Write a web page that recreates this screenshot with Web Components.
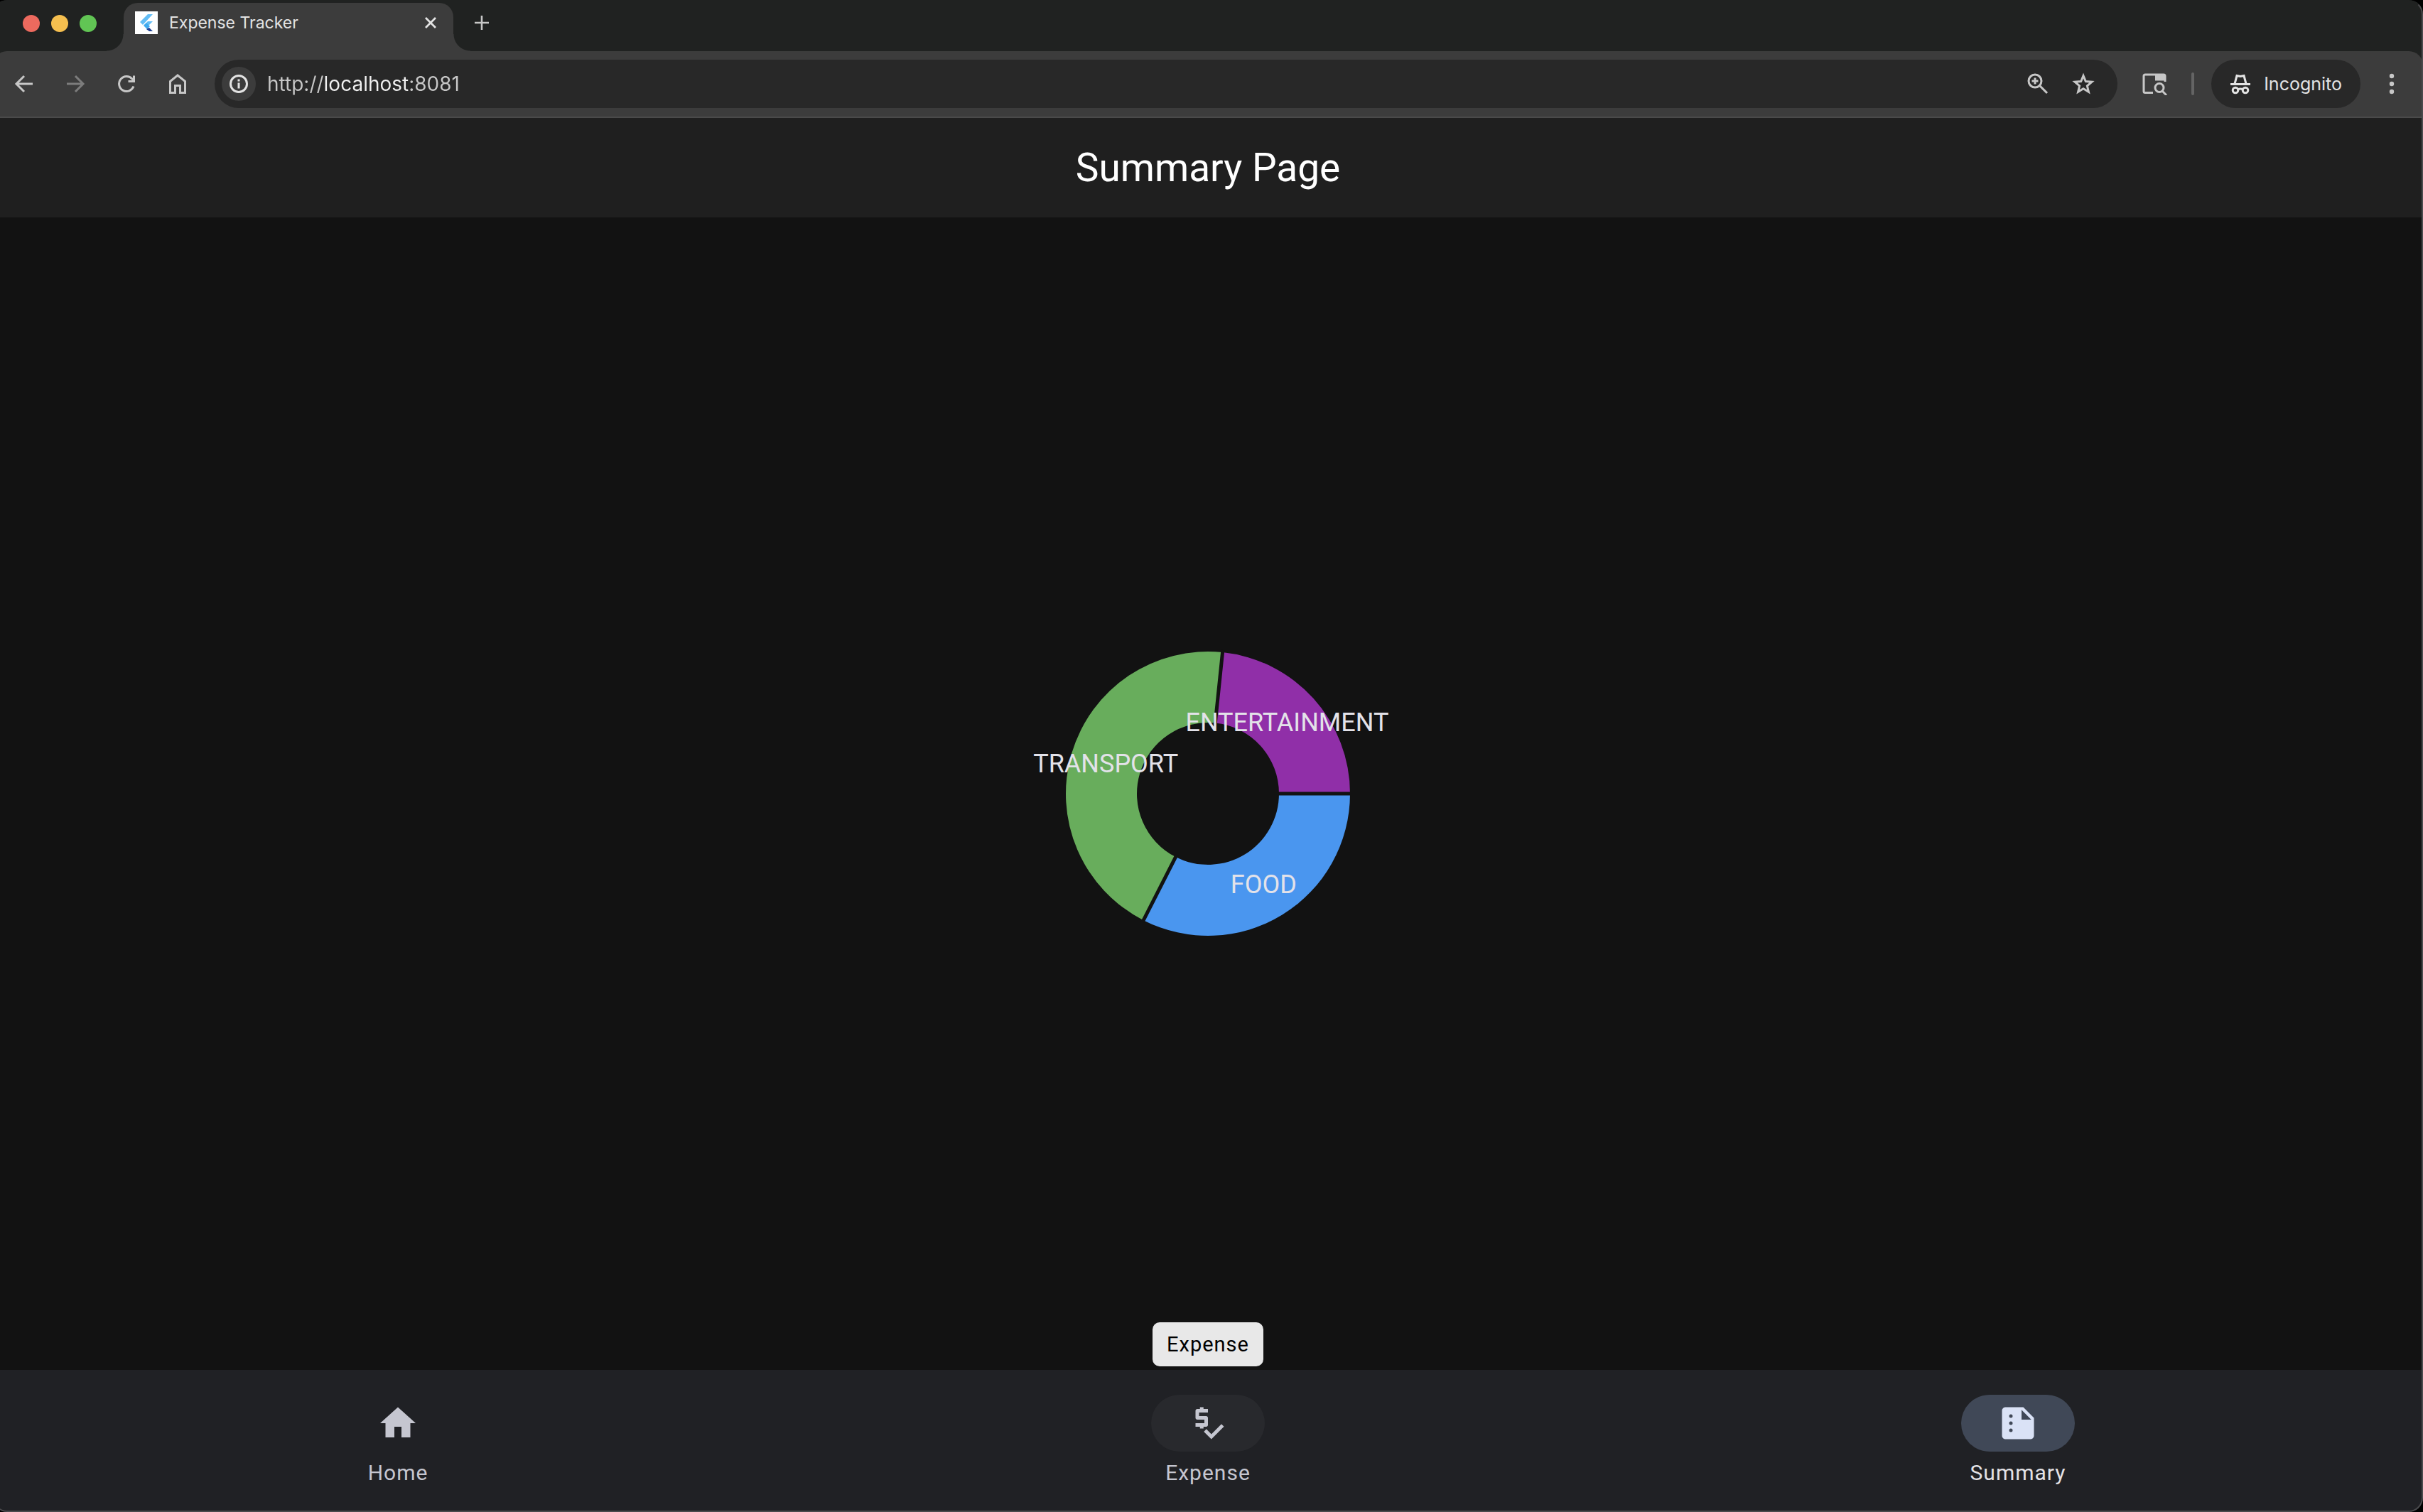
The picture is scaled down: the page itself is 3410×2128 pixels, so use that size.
<!DOCTYPE html>
<html lang="en">
<head>
<meta charset="utf-8">
<title>Expense Tracker</title>
<style>
  html, body { margin: 0; height: 100%; background: #000; overflow: hidden; }
  body { font-family: Inter, "Liberation Sans", sans-serif; }
</style>
</head>
<body>
<browser-window>
  <tab-strip slot="tabs"><browser-tab>Expense Tracker</browser-tab></tab-strip>
  <browser-toolbar slot="toolbar"></browser-toolbar>
  <app-bar>Summary Page</app-bar>
  <app-body><expense-chart></expense-chart></app-body>
  <nav-bar>
    <nav-item icon="home">Home</nav-item>
    <nav-item icon="expense" hovered tip="Expense">Expense</nav-item>
    <nav-item icon="summary" selected>Summary</nav-item>
  </nav-bar>
</browser-window>
<script>
function define(name, markup, setup) {
  customElements.define(name, class extends HTMLElement {
    connectedCallback() {
      if (this.shadowRoot) return;
      const root = this.attachShadow({ mode: 'open' });
      root.innerHTML = '<style>:host,*{box-sizing:border-box}button{border:0;padding:0;margin:0;background:none;color:inherit;font:inherit;cursor:pointer}svg{display:block}</style>' + markup;
      if (setup) setup.call(this, root);
    }
  });
}

define('browser-window', `
<style>
  /* The window starts 10px beyond the left edge of the screen. */
  :host { display: flex; flex-direction: column; position: relative;
    height: 100vh; margin-left: -10px; border-radius: 20px; overflow: hidden; background: #202221; }
  :host::after { content: ""; position: absolute; inset: 0; border-radius: 20px; pointer-events: none;
    border: 2px solid #4b4b4e; border-top-color: transparent; }
</style>
<slot name="tabs"></slot><slot name="toolbar"></slot><slot></slot>`);

define('tab-strip', `
<style>
  :host { display: flex; align-items: flex-start; height: 72px; padding: 4px 0 0 42px; background: #202221; }
  .lights { display: flex; gap: 16px; padding-top: 17px; margin-right: 38px; }
  .lights button { width: 24px; height: 24px; border-radius: 50%; }
  .close { background: #ed6a5e; } .min { background: #f5bf4f; } .max { background: #61c554; }
  .new { width: 56px; height: 56px; display: grid; place-items: center; margin-left: 12px; }
</style>
<div class="lights">
  <button class="close" aria-label="Close window"></button>
  <button class="min" aria-label="Minimise window"></button>
  <button class="max" aria-label="Zoom window"></button>
</div>
<slot></slot>
<button class="new" aria-label="New tab"><svg width="22" height="22" viewBox="0 0 22 22" stroke="#c7c7c7" stroke-width="2.6"><path d="M11 1v20M1 11h20"/></svg></button>`);

define('browser-tab', `
<style>
  :host { display: flex; align-items: center; position: relative; width: 464px; height: 68px;
    padding: 0 16px 12px; gap: 16px; border-radius: 20px 20px 0 0; background: #3c3c3c; color: #e3e3e3;
    font-size: 23px; line-height: 32px; }
  :host::before, :host::after { content: ""; position: absolute; bottom: 0; width: 24px; height: 24px; }
  :host::before { right: 100%; background: radial-gradient(circle at 0 0, transparent 23px, #3c3c3c 24px); }
  :host::after { left: 100%; background: radial-gradient(circle at 100% 0, transparent 23px, #3c3c3c 24px); }
  .title { flex: 1; white-space: nowrap; }
  button { width: 32px; height: 32px; display: grid; place-items: center; }
</style>
<svg width="32" height="32" viewBox="0 0 32 32"><rect width="32" height="32" fill="#fff"/>
  <path d="M18 4h7L11 19l-4-4z" fill="#63bdf5"/><path d="M18 14h7l-6 6-6-1z" fill="#63bdf5"/>
  <path d="M12 20l4-4 5 5-4 4z" fill="#3fa9ee"/><path d="M16 25l4-2 5 5h-5z" fill="#1c3f94"/></svg>
<span class="title"><slot></slot></span>
<button aria-label="Close tab"><svg width="16" height="16" viewBox="0 0 16 16" stroke="#e3e3e3" stroke-width="2.8"><path d="M1 1l14 14M15 1L1 15"/></svg></button>`);

define('browser-toolbar', `
<style>
  :host { display: flex; align-items: center; justify-content: space-between; height: 94px;
    padding: 0 16px; border-bottom: 2px solid #4a4a4a; border-radius: 20px 20px 0 0; background: #3c3c3c; color: #c7c7c7; }
  .nav { display: flex; gap: 16px; }
  .icon { width: 56px; height: 56px; display: grid; place-items: center; flex: none; }
  .icon[disabled] { color: #7c7c7c; }
  svg { fill: none; stroke: currentColor; stroke-width: 3; }
  form { flex: 1; display: flex; align-items: center; height: 68px; margin: 0 24px; padding: 0 20px 0 10px; gap: 8px;
    border-radius: 34px; background: #282828; }
  .info { width: 48px; height: 48px; border-radius: 50%; background: #3c3c3c; color: #e3e3e3; display: grid; place-items: center; margin-right: 8px; }
  /* Only the host name is drawn in the bright colour. */
  input { flex: 1; min-width: 0; border: 0; outline: 0; padding: 0; height: 40px; font: 28px/40px Inter, sans-serif;
    background: linear-gradient(90deg, #c7c7c7 80px, #f0f0f0 80px 201px, #c7c7c7 201px);
    -webkit-background-clip: text; background-clip: text; -webkit-text-fill-color: transparent; color: #c7c7c7; }
  .line { width: 4px; height: 32px; border-radius: 2px; background: #646464; margin: 0 24px; }
  .incognito { display: flex; align-items: center; height: 68px; gap: 18px; padding: 0 26px; border-radius: 34px;
    background: #282828; color: #e3e3e3; font-size: 25px; line-height: 36px; margin-right: 16px; }
</style>
<div class="nav">
  <button class="icon" aria-label="Back"><svg width="28" height="28" viewBox="0 0 28 28"><path d="M26 14H4M14 3L3 14l11 11"/></svg></button>
  <button class="icon" aria-label="Forward" disabled><svg width="28" height="28" viewBox="0 0 28 28"><path d="M2 14h22M14 3l11 11-11 11"/></svg></button>
  <button class="icon" aria-label="Reload"><svg width="28" height="28" viewBox="0 0 28 28"><path d="M24 17.500A10.500 10.500 0 1 1 22 7l2.500 2.500M24.500 2.500V10.500H16.500"/></svg></button>
  <button class="icon" aria-label="Home"><svg width="28" height="30" viewBox="0 0 28 30"><path d="M3.500 27.500V11.500L14 3l10.500 8.500v16h-7v-10h-7v10z"/></svg></button>
</div>
<form>
  <button class="info" type="button" aria-label="View site information"><svg width="28" height="28" viewBox="0 0 28 28"><circle cx="14" cy="14" r="11.500"/><path d="M14 12.500v8M14 7.500v3"/></svg></button>
  <input type="text" aria-label="Address" value="http://localhost:8081">
  <button class="icon" type="button" aria-label="Zoom"><svg width="30" height="30" viewBox="0 0 30 30"><circle cx="11" cy="11" r="9"/><path d="M17.500 17.500L28 28M11 6.500v9M6.500 11h9"/></svg></button>
  <button class="icon" type="button" aria-label="Bookmark"><svg width="32" height="32" viewBox="0 0 32 32"><path d="M16 4.500l3.300 8 8.700.7-6.600 5.700 2 8.400-7.400-4.500-7.400 4.500 2-8.400L4 13.200l8.700-.7z"/></svg></button>
</form>
<button class="icon" aria-label="Search side panel"><svg width="36" height="32" viewBox="0 0 36 32"><path d="M16 28.500H5a2 2 0 0 1-2-2V5a2 2 0 0 1 2-2h26a2 2 0 0 1 2 2v8"/><path d="M19 3h13.500v8.500H19z" fill="currentColor" stroke="none"/><circle cx="25" cy="21.500" r="6"/><path d="M29 26l6 6"/></svg></button>
<span class="line"></span>
<button class="incognito"><svg width="30" height="30" viewBox="0 0 30 30"><path d="M1 15.500h28"/><path d="M7 15l3-11.500 5 1 5-1L23 15"/><circle cx="8" cy="24" r="3.800"/><circle cx="22" cy="24" r="3.800"/><path d="M11.500 23q3.500-2 7 0"/></svg>Incognito</button>
<button class="icon" aria-label="Menu"><svg width="8" height="30" viewBox="0 0 8 30"><g fill="currentColor" stroke="none"><circle cx="4" cy="4" r="3.200"/><circle cx="4" cy="15" r="3.200"/><circle cx="4" cy="26" r="3.200"/></g></svg></button>`);

define('app-bar', `
<style>
  :host { display: flex; align-items: center; justify-content: center; height: 140px; background: #1f1f1f; color: #fff;
    font-family: Roboto, sans-serif; }
  h1 { margin: 0; font-size: 55px; line-height: 70px; font-weight: 400; }
</style>
<h1><slot></slot></h1>`);

define('app-body', `
<style>:host { flex: 1; display: flex; align-items: center; justify-content: center; background: #121212; }</style>
<slot></slot>`);

define('expense-chart', `
<style>
  :host { display: block; width: 400px; height: 400px; }
  svg { overflow: visible; width: 100%; height: 100%; }
  text { font: 36px Roboto, sans-serif; fill: #e3e2e9; text-anchor: middle; }
</style>
<svg viewBox="-200 -200 400 400" role="img" aria-label="Expenses by category"></svg>`, function (root) {
  const parts = [
    { name: 'FOOD', from: 0, to: 117, color: '#4a96ef' },
    { name: 'TRANSPORT', from: 117, to: 275.9, color: '#68ad5c' },
    { name: 'ENTERTAINMENT', from: 275.9, to: 360, color: '#902fa8' }
  ];
  const at = (deg, r) => [r * Math.cos(deg * Math.PI / 180), r * Math.sin(deg * Math.PI / 180)];
  let out = '';
  for (const p of parts) {
    const big = p.to - p.from > 180 ? 1 : 0;
    out += `<path fill="${p.color}" d="M${at(p.from, 200)}A200 200 0 ${big} 1 ${at(p.to, 200)}L${at(p.to, 100)}A100 100 0 ${big} 0 ${at(p.from, 100)}z"/>`;
  }
  for (const p of parts) out += `<path stroke="#121212" stroke-width="5" d="M${at(p.from, 97)}L${at(p.from, 203)}"/>`;
  for (const p of parts) {
    const [x, y] = at((p.from + p.to) / 2, 150);
    out += `<text x="${x}" y="${y + 12}">${p.name}</text>`;
  }
  root.querySelector('svg').innerHTML = out;
});

define('nav-bar', `
<style>:host { display: flex; height: 200px; background: #202125; }</style><slot></slot>`);

const icons = {
  home: '<path d="M10 20v-6h4v6h5v-8h3L12 3 2 12h3v8z"/>',
  expense: '<path d="M12 13V9c0-.55-.45-1-1-1H7V6h5V4H9.500V3h-2v1H6c-.55 0-1 .45-1 1v4c0 .55.45 1 1 1h4v2H5v2h2.500v1h2v-1H11c.55 0 1-.45 1-1z"/><path d="M19.590 12.520l-5.660 5.650-2.830-2.830-1.410 1.420L13.930 21 21 13.930z"/>',
  summary: '<path fill-rule="evenodd" d="M15 3H5c-1.100 0-2 .9-2 2v14c0 1.100.9 2 2 2h14c1.100 0 2-.9 2-2V9zM8 17a1 1 0 1 1 0-2 1 1 0 0 1 0 2zm0-4a1 1 0 1 1 0-2 1 1 0 0 1 0 2zm0-4a1 1 0 1 1 0-2 1 1 0 0 1 0 2zm6 1V4.500l5.500 5.500z"/>'
};
define('nav-item', `
<style>
  :host { flex: 1; display: flex; justify-content: center; position: relative; color: #c5c6d0; font-family: Roboto, sans-serif; }
  button { display: flex; flex-direction: column; align-items: center; gap: 10px; padding: 35px 0; }
  .pill { width: 160px; height: 80px; border-radius: 40px; display: grid; place-items: center; }
  svg { fill: currentColor; }
  .label { font-size: 30px; line-height: 40px; letter-spacing: 1px; }
  :host([hovered]) .pill { background: #28292d; }
  :host([selected]) .pill { background: #404857; color: #dae2f6; }
  :host([selected]) .label { color: #e3e2e6; }
  .tip { position: absolute; bottom: 100%; margin-bottom: 5px; padding: 11px 20px; border-radius: 10px; background: #e8e8e8; color: #000;
    font-size: 29px; line-height: 40px; letter-spacing: 1px; }
</style>
<button><span class="pill"><svg width="60" height="60" viewBox="0 0 24 24"></svg></span><span class="label"><slot></slot></span></button>`,
function (root) {
  root.querySelector('svg').innerHTML = icons[this.getAttribute('icon')];
  if (this.hasAttribute('selected')) root.querySelector('button').setAttribute('aria-current', 'page');
  if (this.hasAttribute('tip')) {
    const tip = document.createElement('span');
    tip.className = 'tip';
    tip.setAttribute('role', 'tooltip');
    tip.textContent = this.getAttribute('tip');
    root.append(tip);
  }
});
</script>
</body>
</html>
